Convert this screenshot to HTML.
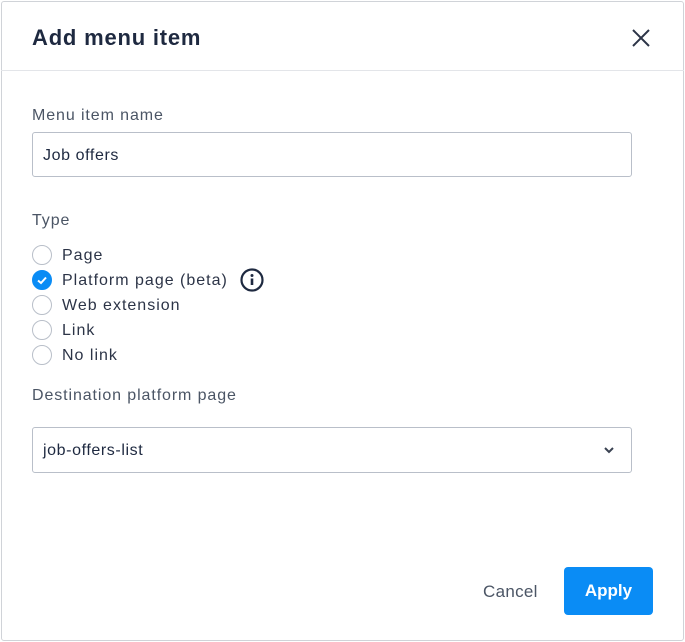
<!DOCTYPE html>
<html><head><style>
*{box-sizing:border-box;margin:0;padding:0}
body{width:685px;height:642px;background:#fff;font-family:"Liberation Sans",sans-serif;position:relative;overflow:hidden}
.dlg{position:absolute;left:1px;top:1px;width:683px;height:640px;border:1px solid #d0d3d8;border-radius:3px}
.abs{position:absolute}
.lbl{font-size:16px;color:#4b5565;letter-spacing:0.9px}
.box{border:1px solid #b9bfc9;border-radius:3px;background:#fff}
.r{position:absolute;left:32px;width:20px;height:20px;border:1px solid #b9bfc9;border-radius:50%}
.rt{position:absolute;left:62px;font-size:16px;color:#2c3447;letter-spacing:1px}
</style></head><body>
<div class="dlg"></div>
<div class="abs" style="left:32px;top:25px;font-size:22px;font-weight:bold;color:#1e2940;letter-spacing:0.8px">Add menu item</div>
<svg class="abs" style="left:631px;top:28px" width="20" height="20" viewBox="0 0 20 20"><path d="M2 2L18 18M18 2L2 18" stroke="#2c3447" stroke-width="2"/></svg>
<div class="abs" style="left:1px;top:70px;width:683px;height:1px;background:#e3e5e9"></div>
<div class="abs lbl" style="left:32px;top:107px">Menu item name</div>
<div class="abs box" style="left:32px;top:132px;width:600px;height:45px"></div>
<div class="abs" style="left:43px;top:147px;font-size:16px;color:#1e2940;letter-spacing:0.6px">Job offers</div>
<div class="abs lbl" style="left:32px;top:212px">Type</div>
<div class="r" style="top:245px"></div><div class="rt" style="top:247px">Page</div>
<div class="r" style="top:270px;background:#0a8cf5;border-color:#0a8cf5"><svg width="18" height="18" viewBox="0 0 18 18"><path d="M5 9.5L8 12L13 6.5" stroke="#fff" stroke-width="2" fill="none"/></svg></div>
<div class="rt" style="top:272px">Platform page (beta)</div>
<svg class="abs" style="left:240px;top:268px" width="24" height="24" viewBox="0 0 24 24"><circle cx="12" cy="12" r="10.5" fill="none" stroke="#1e2940" stroke-width="2.2"/><circle cx="12" cy="7.5" r="1.5" fill="#1e2940"/><path d="M12 10.5V17" stroke="#1e2940" stroke-width="2.6"/></svg>
<div class="r" style="top:295px"></div><div class="rt" style="top:297px">Web extension</div>
<div class="r" style="top:320px"></div><div class="rt" style="top:322px">Link</div>
<div class="r" style="top:345px"></div><div class="rt" style="top:347px">No link</div>
<div class="abs lbl" style="left:32px;top:387px">Destination platform page</div>
<div class="abs box" style="left:32px;top:427px;width:600px;height:46px"></div>
<div class="abs" style="left:43px;top:442px;font-size:16px;color:#1e2940;letter-spacing:0.6px">job-offers-list</div>
<svg class="abs" style="left:603px;top:445px" width="12" height="10" viewBox="0 0 12 10"><path d="M2 3L6 7L10 3" stroke="#3a4252" stroke-width="2" fill="none"/></svg>
<div class="abs" style="left:483px;top:582px;font-size:17px;color:#4b5565;letter-spacing:0.3px">Cancel</div>
<div class="abs" style="left:564px;top:567px;width:89px;height:48px;background:#0a8cf5;border-radius:4px;color:#fff;font-weight:bold;font-size:17px;text-align:center;line-height:48px">Apply</div>
</body></html>
